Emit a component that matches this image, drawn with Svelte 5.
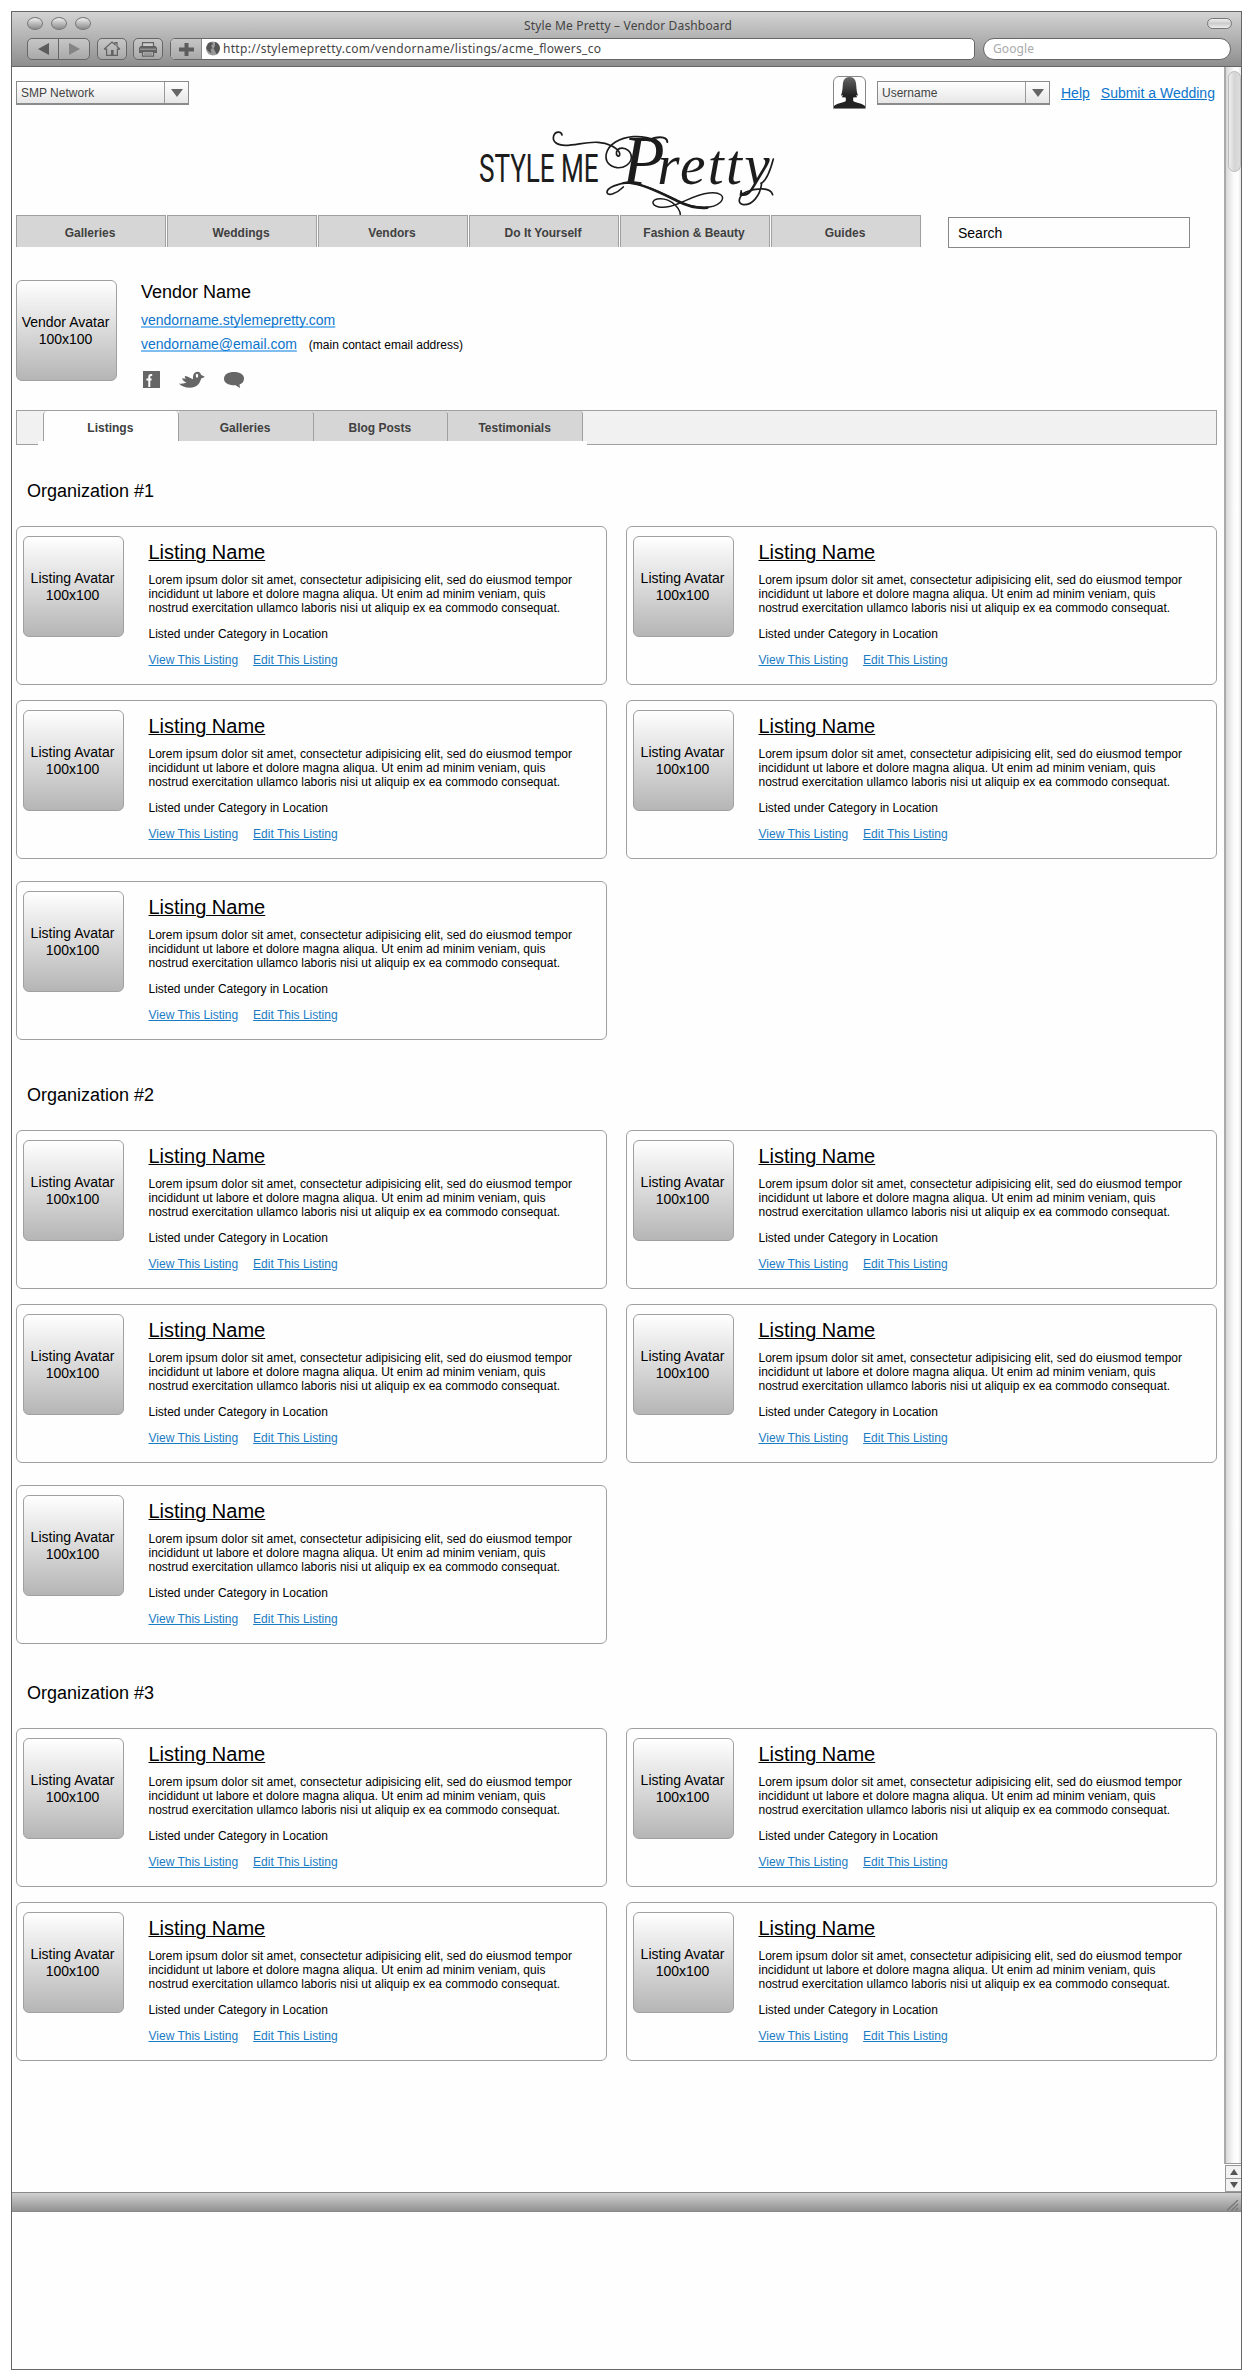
<script>
  const navItems = ['Galleries', 'Weddings', 'Vendors', 'Do It Yourself', 'Fashion & Beauty', 'Guides'];
  const tabs = ['Listings', 'Galleries', 'Blog Posts', 'Testimonials'];
  const organizations = [
    { name: 'Organization #1', listings: 5 },
    { name: 'Organization #2', listings: 5 },
    { name: 'Organization #3', listings: 4 }
  ];
  const lines = [
    'Lorem ipsum dolor sit amet, consectetur adipisicing elit, sed do eiusmod tempor',
    'incididunt ut labore et dolore magna aliqua. Ut enim ad minim veniam, quis',
    'nostrud exercitation ullamco laboris nisi ut aliquip ex ea commodo consequat.'
  ];
</script>

{#snippet select(label)}
  <div class="select">
    <span>{label}</span>
    <i><svg width="12" height="8" viewBox="0 0 12 8"><path d="M0 0H12L6 8Z" fill="#666" /></svg></i>
  </div>
{/snippet}

<div class="window">
  <header class="chrome">
    <div class="titlebar">
      <div class="lights"><b></b><b></b><b></b></div>
      <div class="title">
        <svg width="210" height="18"><text x="1" y="12.500" textLength="208">Style Me Pretty – Vendor Dashboard</text></svg>
      </div>
      <div class="pill"></div>
    </div>
    <div class="toolbar">
      <div class="btn pair">
        <span><svg width="11" height="12" viewBox="0 0 11 12"><path d="M11 0V12L0 6Z" fill="#5c5c5c" /></svg></span>
        <span><svg width="11" height="12" viewBox="0 0 11 12"><path d="M0 0V12L11 6Z" fill="#858585" /></svg></span>
      </div>
      <div class="btn">
        <svg width="18" height="16" viewBox="0 0 18 16" fill="none" stroke="#626262" stroke-width="1.2">
          <path d="M1 8.2L9 1L12 3.7V1.6H14V5.5L17 8.2M1 8.2H3.6V14.4H14.4V8.2H17" />
          <path d="M8 9H10.6V14H8Z" fill="#626262" stroke="none" />
        </svg>
      </div>
      <div class="btn">
        <svg width="18" height="15" viewBox="0 0 18 15" fill="#626262">
          <path d="M3.5 4V.7H14.5V4" fill="#ccc" stroke="#626262" stroke-width="1.2" />
          <path d="M1.5 4H16.5L18 6V11H0V6Z" />
          <path d="M1 7.2H17" stroke="#aaa" />
          <path d="M3.5 9.6H14.5V14.2H3.5Z" fill="#bbb" stroke="#626262" stroke-width="1.2" />
          <path d="M5 12H13" stroke="#777" />
        </svg>
      </div>
      <div class="address">
        <div class="plus"><svg width="15" height="13" viewBox="0 0 15 13"><path d="M0 6.5H15M7.5 0V13" stroke="#5c5c5c" stroke-width="4" /></svg></div>
        <svg class="globe" width="16" height="15" viewBox="0 0 16 15">
          <circle cx="8" cy="7.5" r="7" fill="#999" />
          <path d="M3 2.5Q7 0 8 3L6 4.5L7.5 7.5L5.5 8L6.5 12Q3 11 1.2 7ZM10 1Q14 2 15 7Q14.7 11 11.5 13.5L10 10L8.5 7.5L10 5Z" fill="#555" />
        </svg>
        <svg width="390" height="20"><text x="0" y="14" textLength="378">http://stylemepretty.com/vendorname/listings/acme_flowers_co</text></svg>
      </div>
      <div class="google"><svg width="60" height="20"><text x="0" y="14" textLength="41">Google</text></svg></div>
    </div>
  </header>

  <div class="viewport">
    <main>
      <div class="topbar">
        {@render select('SMP Network')}
        <div class="avatar-thumb">
          <svg width="31" height="31" viewBox="0 0 31 31">
            <defs><linearGradient id="hair" x2="0" y2="1"><stop offset="0" stop-color="#666" /><stop offset=".6" stop-color="#222" /><stop offset="1" stop-color="#222" /></linearGradient></defs>
            <path d="M15.500 0C11 0 9 3 8.800 8C8.500 13 8 16 7 18.500L9 18.300L7.800 20.200L11.800 20.500V24C9 26 2 26.500 0 29V31H31V29C29 26.500 22 26 19.200 24V20.500L23.200 20.200L22 18.300L24 18.500C23 16 22.500 13 22.200 8C22 3 20 0 15.500 0Z" fill="url(#hair)" />
          </svg>
        </div>
        {@render select('Username')}
        <a class="toplink" href="#help">Help</a>
        <a class="toplink" href="#submit">Submit a Wedding</a>
      </div>

      <svg class="logo" width="340" height="100" viewBox="0 0 1020 300" role="img" aria-label="Style Me Pretty">
        <g class="caps" transform="translate(57 200) scale(.683 1)">
          <text textLength="525">STYLE ME</text>
        </g>
        <text class="script" x="487" y="206"><tspan font-size="208">P</tspan><tspan dx="-22" font-size="172" letter-spacing="7">retty</tspan></text>
        <g fill="none" stroke="#1c1c1c" stroke-linecap="round">
          <path d="M306 60C304 48 286 48 281 62C276 80 291 91 316 91C350 91 374 80 414 82C444 84 470 97 478 112C481 119 478 125 473 123C467 119 467 104 480 100C499 96 515 111 514 129C512 147 492 160 471 158C447 155 434 138 439 116C446 88 478 68 520 65C550 63 571 69 590 76" stroke-width="5" />
          <path d="M568 76C584 65 621 61 622 81" stroke-width="6" />
          <path d="M508 203C476 205 440 217 441 232C443 245 470 236 490 216" stroke-width="5" />
          <path d="M503 203C548 205 611 235 652 257C700 280 756 286 782 261C798 243 779 230 747 234C701 239 674 263 631 274C602 280 577 275 579 261C584 246 618 249 637 263C654 276 661 288 661 300" stroke-width="4.500" />
          <path d="M513 204C552 207 611 238 652 258C684 274 715 281 742 278" stroke-width="8" />
          <path d="M903 205C918 198 930 170 940 132M905 205C900 244 876 271 850 269C830 266 836 242 858 231C888 218 932 216 938 239" stroke-width="5" />
        </g>
      </svg>

      <div class="navrow">
        <nav>
          {#each navItems as item}<a href="#nav">{item}</a>{/each}
        </nav>
        <div class="search">Search</div>
      </div>

      <section class="vendor">
        <div class="avatar">Vendor Avatar<br />100x100</div>
        <div class="info">
          <h1>Vendor Name</h1>
          <p><a href="#site">vendorname.stylemepretty.com</a></p>
          <p><a href="#mail">vendorname@email.com</a><small>(main contact email address)</small></p>
          <div class="social">
            <svg width="17" height="17" viewBox="0 0 17 17"><path d="M0 0H17V17H0Z" fill="#666" /><path d="M9.200 4H8C6.700 4 6.300 4.700 6.300 6V16M3.400 8.500H8.600" fill="none" stroke="#fff" stroke-width="2" /></svg>
            <svg width="26" height="17" viewBox="0 0 26 17">
              <path d="M0 12.500C3 13 6 12.500 7.500 11.300C5 11 3.500 9 3 7.200L7 7.800C6 7 5.500 6 6 5C9 5.200 12 7.500 14 8.200C13.500 3.500 15.500 .6 18.800 .7C20.600 .7 21.600 2 22 3.800L26 6L22.200 7.500C20.500 13.500 17.500 16.700 11 16.700C6 16.700 2 15 0 12.500Z" fill="#666" />
              <ellipse cx="18" cy="4.800" rx="1.200" ry="2" fill="#fff" />
            </svg>
            <svg width="20" height="17" viewBox="0 0 20 17"><path d="M10 1C16 1 20 3.500 20 7.500C20 10.500 18.500 12.500 15.500 13.500L16 17L11.500 14.200C4.500 14.500 0 12 0 7.700C0 3.500 4 1 10 1Z" fill="#666" /></svg>
          </div>
        </div>
      </section>

      <div class="tabbar">
        <div class="tabs">
          {#each tabs as tab, i}<a href="#tab" class:active={i === 0}>{tab}</a>{/each}
        </div>
      </div>

      {#each organizations as org}
        <section class="org">
          <h2>{org.name}</h2>
          <div class="grid">
            {#each Array(org.listings) as _}
              <article>
                <div class="avatar">Listing Avatar<br />100x100</div>
                <div class="details">
                  <h3>Listing Name</h3>
                  <p>{#each lines as line}<span>{line}</span>{/each}</p>
                  <p>Listed under Category in Location</p>
                  <p class="actions"><a href="#view">View This Listing</a><a href="#edit">Edit This Listing</a></p>
                </div>
              </article>
            {/each}
          </div>
        </section>
      {/each}
    </main>

    <aside class="scroll">
      <div class="track"><div class="thumb"></div></div>
      <div class="arrows">
        <span><svg width="8" height="6" viewBox="0 0 8 6"><path d="M4 0L8 6H0Z" fill="#555" /></svg></span>
        <span><svg width="8" height="6" viewBox="0 0 8 6"><path d="M0 0H8L4 6Z" fill="#555" /></svg></span>
      </div>
    </aside>
  </div>

  <footer>
    <svg width="12" height="11" viewBox="0 0 12 11"><path d="M0 10.500L11 0M4.500 10.500L11 4M8.500 10.500L11 8" stroke="#777" stroke-width="1.300" /></svg>
  </footer>
</div>

<style>
  :global(body) { background: #fff; }
  * { box-sizing: border-box; }
  svg { display: block; }
  h1, h2, h3, p { margin: 0; font-weight: 400; }

  .window {
    width: 1231px;
    height: 2359px;
    margin: 11px 0 10px 11px;
    border: 1px solid #666;
    background: #fefefe;
    font: 12px/14px "Liberation Sans", Arial, sans-serif;
    color: #000;
  }

  .chrome {
    height: 55px;
    border-bottom: 1px solid #666;
    background: linear-gradient(#d3d3d3, #8e8e8e);
    font: 12px "Noto Sans", "Open Sans", sans-serif;
  }
  .chrome text { fill: #444; }
  .titlebar {
    display: flex;
    justify-content: space-between;
    height: 26px;
    padding: 5px 9px 0 15px;
  }
  .lights { display: flex; gap: 8px; width: 220px; }
  .lights b {
    width: 16px;
    height: 13px;
    border: 1px solid #777;
    border-radius: 50%;
    background: linear-gradient(#eee, #8a8a8a);
  }
  .title { width: 210px; margin-right: 29px; }
  .pill {
    width: 25px;
    height: 11px;
    margin: 1px 0 0 170px;
    border: 1px solid #777;
    border-radius: 6px;
    background: linear-gradient(#eee, #ccc 50%, #eee);
  }
  .toolbar { display: flex; height: 22px; padding-left: 15px; }
  .btn {
    display: flex;
    align-items: center;
    justify-content: center;
    width: 30px;
    margin-right: 6px;
    border: 1px solid #666;
    border-radius: 5px;
    background: linear-gradient(#c6c6c6, #a9a9a9);
  }
  .pair { width: 63px; margin-right: 7px; }
  .pair span { display: grid; place-items: center; flex: 1; height: 100%; }
  .pair span + span { border-left: 1px solid #666; }
  .address {
    display: flex;
    width: 805px;
    margin-left: 1px;
    border: 1px solid #666;
    border-radius: 5px;
    background: #fff;
    overflow: hidden;
  }
  .plus {
    display: grid;
    place-items: center;
    width: 31px;
    border-right: 1px solid #888;
    background: linear-gradient(#c6c6c6, #a9a9a9);
  }
  .globe { margin: 2px 2px 0 3px; }
  .google {
    width: 248px;
    margin-left: 8px;
    padding-left: 9px;
    border: 1px solid #666;
    border-radius: 11px;
    background: #fff;
  }
  .google text { fill: #aaa; }

  .viewport { display: flex; height: 2125px; }
  main { flex: 1; padding: 9px 7px 0 4px; }

  .topbar { display: flex; height: 33px; }
  .select {
    display: flex;
    width: 173px;
    height: 24px;
    margin-top: 5px;
    border: 1px solid #8b8b8b;
    border-bottom-width: 2px;
    background: linear-gradient(#fff, #e6e6e6);
    color: #444;
  }
  .select span { flex: 1; padding: 4px 0 0 4px; }
  .select i { display: grid; place-items: center; width: 24px; border-left: 1px solid #999; }
  .avatar-thumb {
    width: 33px;
    height: 33px;
    margin: 0 11px 0 644px;
    border: 1px solid #888;
    border-radius: 6px 6px 0 0;
    overflow: hidden;
  }
  .toplink {
    margin: 9px 0 0 11px;
    font-size: 14px;
    line-height: 16px;
    color: #0b74cc;
    white-space: nowrap;
  }
  .toplink + .toplink { margin-left: 11px; }

  .logo { margin: 6px 0 0 444px; }
  .logo text { fill: #1c1c1c; }
  .caps { font: 400 115px Roboto, sans-serif; }
  .script { font-family: "Liberation Serif", serif; font-style: italic; }

  .navrow { display: flex; height: 33px; }
  nav { display: flex; gap: 1px; height: 32px; }
  nav a {
    width: 150px;
    padding-right: 2px;
    border: 1px solid #a0a0a0;
    border-bottom: 0;
    background: #d6d6d6;
    color: #404040;
    font-weight: 700;
    line-height: 35px;
    text-align: center;
    text-decoration: none;
  }
  .search {
    width: 242px;
    height: 31px;
    margin: 2px 0 0 27px;
    padding-left: 9px;
    border: 1px solid #888;
    font-size: 14px;
    line-height: 31px;
  }

  .avatar {
    display: flex;
    align-items: center;
    width: 101px;
    height: 101px;
    flex: none;
    justify-content: center;
    padding-right: 2px;
    border: 1px solid #a0a0a0;
    border-radius: 6px;
    background: linear-gradient(#fff, #b5b5b5);
    font-size: 14px;
    line-height: 17px;
    text-align: center;
    white-space: nowrap;
  }
  .vendor { display: flex; gap: 24px; height: 101px; margin-top: 32px; }
  .info h1 { padding-top: 1px; font-size: 18px; line-height: 22px; }
  .info p { height: 24px; font-size: 14px; line-height: 17px; }
  .info h1 + p { margin-top: 9px; }
  .info a {
    color: #0b74cc;
    text-decoration-color: #7fbdf0;
    text-decoration-thickness: 2px;
    text-underline-offset: 1px;
    text-decoration-skip-ink: none;
  }
  .info small { margin-left: 12px; font-size: 12px; }
  .social { display: flex; padding: 11px 0 0 2px; }
  .social svg + svg { margin-left: 19px; }

  .tabbar {
    height: 35px;
    margin-top: 29px;
    padding-left: 21px;
    border: 1px solid #a0a0a0;
    background: #f1f1f1;
  }
  .tabs {
    display: flex;
    width: 549px;
    height: 35px;
    padding: 0 4px 5px 5px;
    background:
      linear-gradient(#f1f1f1, #f1f1f1) 0 0 / 5px 30px no-repeat,
      linear-gradient(#f1f1f1, #f1f1f1) 100% 0 / 4px 30px no-repeat,
      #fefefe;
  }
  .tabs a {
    flex: 1;
    height: 30px;
    padding-right: 1px;
    border-right: 1px solid #a0a0a0;
    border-radius: 0 3px 0 0;
    background: #d6d6d6;
    color: #404040;
    font-weight: 700;
    line-height: 34px;
    text-align: center;
    text-decoration: none;
  }
  .tabs a.active { border-left: 1px solid #a0a0a0; border-radius: 4px 4px 0 0; background: #fefefe; }

  .org { margin-top: 35px; }
  .org + .org { margin-top: 44px; }
  .org + .org + .org { margin-top: 38px; }
  h2 { padding-left: 11px; font-size: 18px; line-height: 22px; }
  .grid {
    display: grid;
    grid-template-columns: 591px 591px;
    column-gap: 19px;
    row-gap: 15px;
    margin-top: 24px;
  }
  article {
    display: flex;
    gap: 24.5px;
    height: 159px;
    padding: 9px 0 0 6px;
    border: 1px solid #a0a0a0;
    border-radius: 6px;
  }
  article:nth-child(5) { margin-top: 7px; }
  .details { padding-top: 4px; }
  .details h3 {
    margin-bottom: 9px;
    font-size: 20px;
    line-height: 24px;
    text-decoration: underline;
    text-decoration-thickness: 1px;
  }
  .details span { display: block; white-space: nowrap; }
  .details p + p { margin-top: 12px; }
  .actions { display: flex; gap: 15px; }
  .actions a { color: #1a7cc4; }

  .scroll { display: flex; flex-direction: column; gap: 1px; width: 17px; }
  .track {
    height: 2097px;
    padding: 4px 0 0 2px;
    border-left: 2px solid #aaa;
    border-bottom: 1px solid #999;
    background: linear-gradient(90deg, #d8d8d8, #fafafa 50%, #fff 80%, #e4e4e4);
  }
  .thumb {
    height: 101px;
    border: 1px solid #bbb;
    border-radius: 7px;
    background: linear-gradient(90deg, #eee, #d5d5d5 50%, #ddd);
  }
  .arrows { margin-left: 1px; border: 1px solid #999; border-right: 0; background: #f2f2f2; }
  .arrows span { display: grid; place-items: center; height: 12px; }
  .arrows span + span { height: 13px; border-top: 1px solid #999; }

  footer {
    display: flex;
    justify-content: flex-end;
    height: 20px;
    padding: 7px 2px 0 0;
    border-top: 1px solid #888;
    border-bottom: 1px solid #888;
    background: linear-gradient(#d0d0d0, #929292);
  }
</style>
